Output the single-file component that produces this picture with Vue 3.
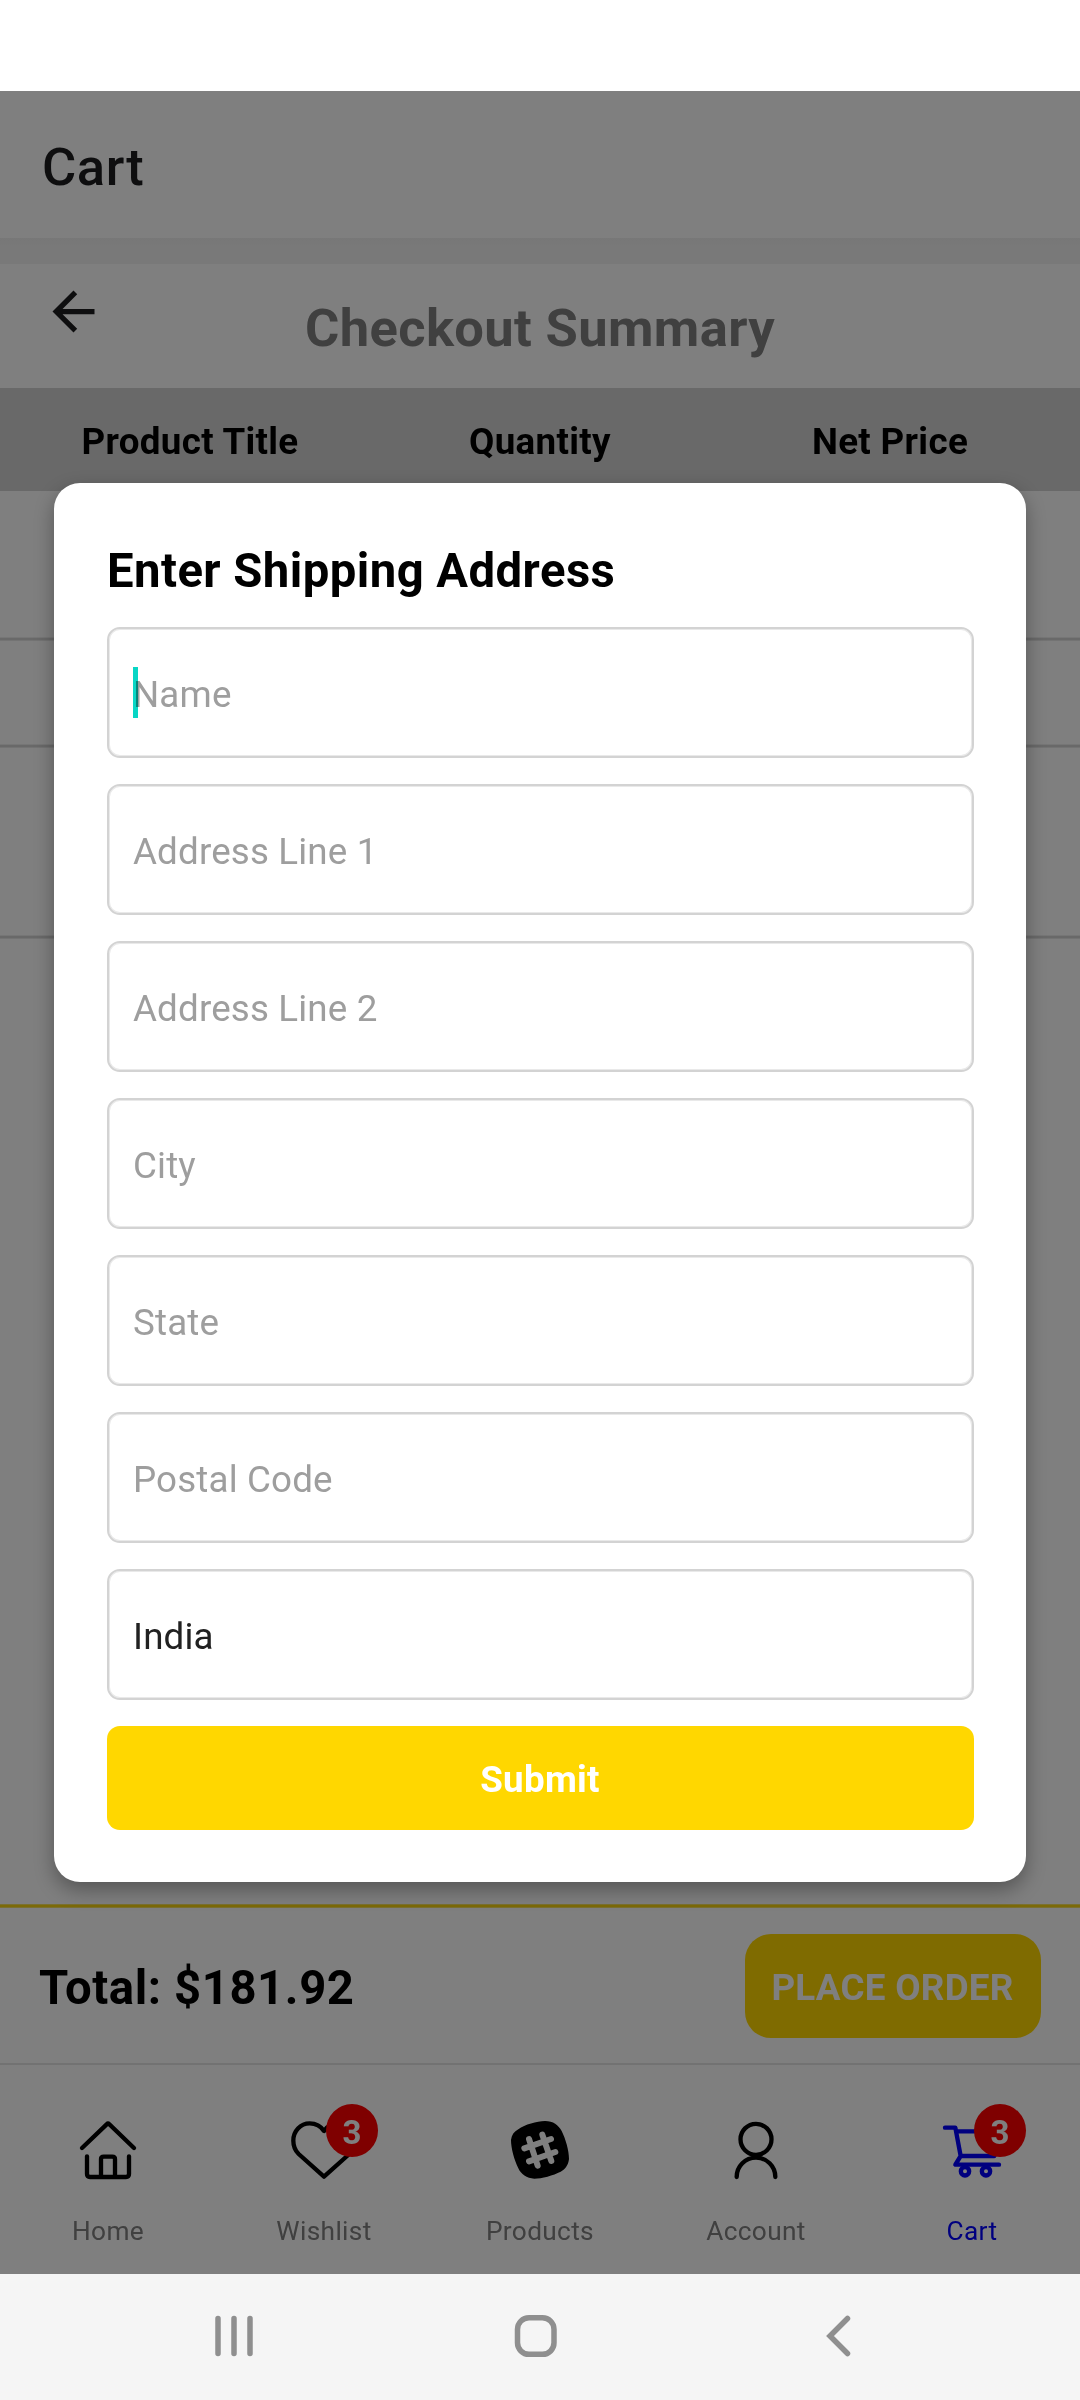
<script setup>
const columns = ['Product Title', 'Quantity', 'Net Price']
const rowHeights = [150, 107, 191]
const fields = [
  { label: 'Name', value: '', focused: true },
  { label: 'Address Line 1', value: '' },
  { label: 'Address Line 2', value: '' },
  { label: 'City', value: '' },
  { label: 'State', value: '' },
  { label: 'Postal Code', value: '' },
  { label: 'Country', value: 'India' }
]
const tabs = [
  { name: 'Home', icon: 'home' },
  { name: 'Wishlist', icon: 'heart', badge: 3 },
  { name: 'Products', icon: 'slack' },
  { name: 'Account', icon: 'user' },
  { name: 'Cart', icon: 'cart', badge: 3, active: true }
]
</script>

<template>
  <div class="phone">
    <div class="status"></div>
    <div class="app">
      <header class="header">Cart</header>
      <div class="band"></div>
      <div class="subheader">
        <svg class="back" viewBox="0 0 24 24"><path d="M20 11H7.83l5.59-5.59L12 4l-8 8 8 8 1.41-1.41L7.83 13H20z" fill="#1c1c1e" /></svg>
        <h1>Checkout Summary</h1>
      </div>
      <div class="thead">
        <span v-for="c in columns" :key="c">{{ c }}</span>
      </div>
      <div class="rows">
        <div v-for="(h, i) in rowHeights" :key="i" class="row" :style="{ height: h + 'px' }"></div>
      </div>
      <div class="footer">
        <span class="total">Total: $181.92</span>
        <button class="place">PLACE ORDER</button>
      </div>
      <nav class="tabs">
        <div v-for="t in tabs" :key="t.name" class="tab" :class="{ active: t.active }">
          <div class="icon">
            <svg v-if="t.icon === 'home'" viewBox="-18 0 210 174">
              <path d="M9 81 83 10q4-4 8 0l74 71M24 106v53q0 9 9 9h108q9 0 9-9v-53M66 168v-54q0-7 8-7h26q8 0 8 7v54" />
            </svg>
            <svg v-else-if="t.icon === 'heart'" viewBox="-18 0 210 174">
              <path d="M87 30C78 16 63 7 44 7A49 51 0 0 0-5 59C-5 79 3 91 11 99L87 167 163 99C171 91 179 79 179 59A49 51 0 0 0 130 7C111 7 96 16 87 30Z" />
            </svg>
            <svg v-else-if="t.icon === 'slack'" viewBox="-18 0 210 174">
              <path class="solid" d="M22 25C42 10 77 1 102 0C127 0 142 12 152 30C164 55 174 87 174 114C172 134 161 145 149 152C127 163 92 173 70 173C47 172 30 160 22 142C10 117 0 82 0 57C2 42 9 32 22 25Z" />
              <path class="hash" d="M54 54 80 134M94 41 121 120M40 82 120 54M54 121 133 93" />
            </svg>
            <svg v-else-if="t.icon === 'user'" viewBox="-18 0 210 174">
              <circle cx="87" cy="55" r="46.500" /><path d="M29 168A58 58 0 0 1 145 168" />
            </svg>
            <svg v-else viewBox="-18 0 210 174">
              <path d="M6 20H37L53 105 37 131H168M43 31H170L154 105H53" />
              <circle cx="66" cy="151" r="12.500" /><circle cx="129" cy="151" r="12.500" />
            </svg>
            <span v-if="t.badge" class="badge">{{ t.badge }}</span>
          </div>
          <span class="name">{{ t.name }}</span>
        </div>
      </nav>
      <div class="scrim">
        <form class="modal" @submit.prevent>
          <h2>Enter Shipping Address</h2>
          <div v-for="f in fields" :key="f.label" class="field" :class="{ filled: f.value }">
            <span>{{ f.value || f.label }}</span>
            <i v-if="f.focused" class="caret"></i>
          </div>
          <button class="submit">Submit</button>
        </form>
      </div>
    </div>
    <div class="sysnav">
      <svg viewBox="0 0 1080 126" width="1080" height="126" fill="none" stroke="#8f8f8f" stroke-linecap="round">
        <path d="M218 44.500V79.500M234 44.500V79.500M250 44.500V79.500" stroke-width="5.500" />
        <rect x="517.500" y="43.800" width="36.500" height="36.500" rx="11.500" stroke-width="5.500" />
        <path d="M847.500 44.500 830 62 847.500 79.500" stroke-width="5.500" />
      </svg>
    </div>
  </div>
</template>

<style>
body { margin: 0; }
</style>

<style scoped>
.phone {
  width: 1080px;
  height: 2400px;
  display: flex;
  flex-direction: column;
  font-family: Roboto, sans-serif;
  background: #fff;
  color: #000;
  overflow: hidden;
}
.phone * { box-sizing: border-box; }
button { border: 0; font-family: inherit; }
.status { height: 91px; }
.app {
  position: relative;
  height: 2183px;
  display: flex;
  flex-direction: column;
  background: #fff;
}
.header {
  height: 147px;
  padding: 5px 42px 0;
  line-height: 142px;
  font-size: 52.5px;
  letter-spacing: 0.6px;
  font-weight: 500;
  color: #1c1c1e;
}
.band { height: 26px; background: linear-gradient(#efefef, #f2f2f2 8px); }
.subheader {
  height: 124px;
  display: flex;
  align-items: flex-start;
  padding: 16px 42px 0;
}
.back { width: 63px; height: 63px; }
h1 {
  flex: 1;
  margin: 0 63px 0 0;
  line-height: 96px;
  text-align: center;
  font-size: 52.5px;
  letter-spacing: 0.36px;
  font-weight: 700;
  color: #808080;
}
.thead {
  height: 103px;
  padding: 4px 15px 0;
  display: flex;
  background: #d3d3d3;
  font-size: 36.75px;
  letter-spacing: 0.32px;
  font-weight: 700;
  line-height: 100px;
}
.thead span { flex: 1; text-align: center; }
.rows { flex: 1; }
.row {
  background: linear-gradient(#ececec 1px, #d3d3d3 1px, #d3d3d3 3px, #e6e6e6 3px) bottom / 100% 4px no-repeat;
}
.footer {
  height: 159px;
  padding: 4px 39px 0;
  display: flex;
  align-items: center;
  justify-content: space-between;
  background: linear-gradient(#f5e060 1px, #f8d410 1px, #f8d410 3px, #f5e060 3px) top / 100% 4px no-repeat;
}
.total { font-size: 47.25px; letter-spacing: 0.6px; font-weight: 700; padding-top: 5px; }
.place {
  width: 296px;
  height: 104px;
  padding: 3px 1px 0 0;
  border-radius: 26px;
  background: #ffd700;
  color: #fff;
  font-size: 36.75px;
  letter-spacing: 0.28px;
  font-weight: 700;
  white-space: nowrap;
}
.tabs {
  height: 211px;
  display: flex;
  border-top: 2px solid #e4e4e4;
}
.tab {
  flex: 1;
  display: flex;
  flex-direction: column;
  align-items: center;
  padding-top: 56px;
  color: #808080;
}
.icon { position: relative; width: 70px; height: 58px; color: #000; }
.icon svg {
  display: block;
  width: 70px;
  height: 58px;
  overflow: visible;
  fill: none;
  stroke: currentColor;
  stroke-width: 13;
  stroke-linecap: round;
  stroke-linejoin: round;
}
.icon .solid { fill: currentColor; stroke: none; }
.icon .hash { stroke: #fff; stroke-width: 18; }
.active, .active .icon { color: #00f; }
.badge {
  position: absolute;
  left: 37px;
  top: -17px;
  width: 52px;
  height: 53px;
  border-radius: 50%;
  background: #f00;
  color: #fff;
  font-size: 33px;
  font-weight: 700;
  line-height: 57px;
  text-align: center;
}
.name {
  margin-top: 33px;
  font-size: 26.25px;
  letter-spacing: 0.34px;
  line-height: 38px;
}
.scrim {
  position: absolute;
  inset: 0;
  background: rgba(0, 0, 0, 0.5);
  display: flex;
  flex-direction: column;
  align-items: center;
  justify-content: center;
}
.modal {
  width: 972px;
  height: 1399px;
  padding: 54px 52px 52px 53px;
  border-radius: 26px;
  background: #fff;
  box-shadow: 0 8px 20px rgba(0, 0, 0, 0.33);
  display: flex;
  flex-direction: column;
}
h2 {
  margin: 0 0 21px;
  font-size: 47.25px;
  letter-spacing: 0.45px;
  line-height: 69px;
  font-weight: 700;
}
.field {
  position: relative;
  height: 131px;
  margin-bottom: 26px;
  padding: 4px 24px 0;
  border: 2px solid #d3d3d3;
  border-radius: 13px;
  box-shadow: inset 0 0 0 1px #e9e9e9;
  font-size: 36.75px;
  letter-spacing: 0.15px;
  line-height: 123px;
  color: #9e9e9e;
}
.filled { color: #212121; }
.caret {
  position: absolute;
  left: 24px;
  top: 38px;
  width: 5px;
  height: 51px;
  background: #08d6c5;
  mix-blend-mode: multiply;
}
.submit {
  height: 104px;
  padding: 3px 1px 0 0;
  border-radius: 13px;
  background: #ffd700;
  color: #fff;
  font-size: 36.75px;
  letter-spacing: 0.3px;
  font-weight: 700;
}
.sysnav { height: 126px; background: #f5f5f5; }
.sysnav svg { display: block; }
</style>
